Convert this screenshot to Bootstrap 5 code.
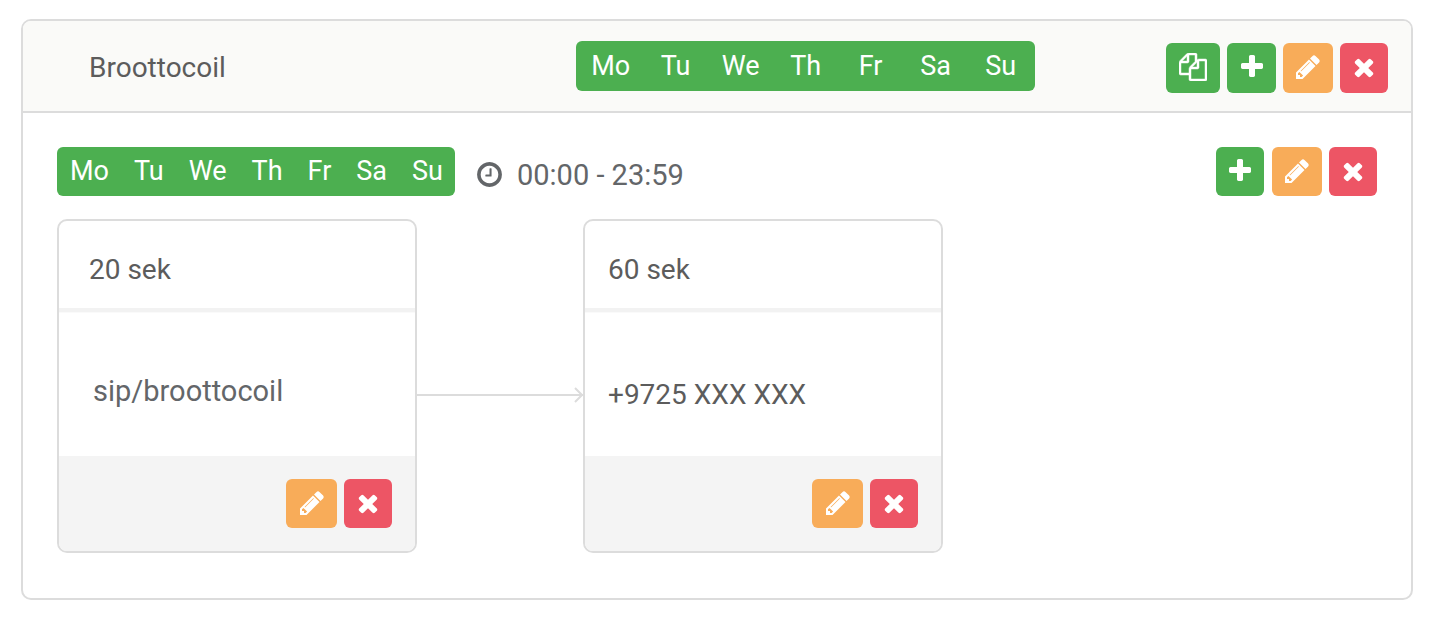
<!DOCTYPE html>
<html lang="en">
<head>
<meta charset="utf-8">
<meta name="viewport" content="width=device-width, initial-scale=1">
<title>Call routing</title>
<link href="https://cdn.jsdelivr.net/npm/bootstrap@5.3.0/dist/css/bootstrap.min.css" rel="stylesheet">
<style>
  :root { --line: #dcdcdc; --green: #4caf50; --amber: #f8ac59; --red: #ed5565; }
  body { font-family: Roboto, "Liberation Sans", sans-serif; font-size: 28px; line-height: 32px; color: #5c5c5c; background: #fff; }
  .page { padding: 19px 22px 20px 21px; }
  .panel, .step { border: 2px solid var(--line); border-radius: 10px; background: #fff; --bs-card-inner-border-radius: 8px; color: inherit; }
  .panel-head { background: #fafaf8; border-bottom: 2px solid var(--line); border-radius: 8px 8px 0 0; padding: 20px 23px 18px 66px; }
  .panel-title { width: 37.5%; font-size: 28px; line-height: 54px; margin-bottom: -2px; font-weight: 400; }
  .days { background: var(--green); color: #fff; border-radius: 6px; font-size: 27px; line-height: 49px; }
  .days-even { padding: 1px 2px 0; height: 50px; }
  .days-even li { width: 65px; text-align: center; }
  .days-tight { padding: 0 12px 0 13px; gap: 25px; }
  .panel-main { padding: 34px 34px 45px; }
  .act { width: 48px; height: 49px; padding: 0 0 2px; border: 0; border-radius: 6px; color: #fff; display: flex; align-items: center; justify-content: center; }
  .act:hover { color: #fff; filter: brightness(.95); }
  .panel-head .act { height: 50px; }
  .act-green, .act-green:hover { background: var(--green); }
  .act-amber, .act-amber:hover { background: var(--amber); width: 50px; }
  .act-red, .act-red:hover { background: var(--red); }
  .panel-head .act-green { width: 49px; }
  .panel-head .act-wide { width: 54px; }
  .step .act-amber { width: 51px; }
  .acts { gap: 7px; }
  .panel-main .act-green { margin-right: 1px; }
  .ico { width: 28px; height: 28px; fill: currentColor; display: block; }
  .ico-bold { stroke: currentColor; stroke-width: 30; }
  .hours { color: #636669; font-size: 29px; line-height: 36px; gap: 13px; margin-left: 20px; padding-top: 6px; }
  .hours .ico { width: 29px; height: 29px; }
  .steps { margin-top: 23px; }
  .step { flex: 0 1 360px; }
  .step-head { padding: 33px 23px 22px; border-bottom: 4px solid #f2f2f2; box-shadow: 0 1px 0 #fafafa; }
  .step-main { height: 144px; padding: 22px 23px 0; }
  .step-first .step-head { padding-left: 30px; }
  .step-first .step-main { padding: 14px 34px 0; font-size: 29px; color: #636669; }
  .step-foot { background: #f4f4f4; border-radius: 0 0 8px 8px; padding: 23px; }
  .link-arrow { flex: 0 1 166px; min-width: 24px; height: 16px; margin-top: 18px; display: flex; align-items: center; position: relative; }
  .link-arrow::before { content: ""; flex: 1; height: 2px; background: var(--line); }
  .link-arrow svg { position: absolute; right: 0; top: 0; width: 10px; height: 16px; fill: none; stroke: var(--line); stroke-width: 2; }
</style>
</head>
<body>
<svg class="d-none" aria-hidden="true">
  <symbol id="i-plus" viewBox="0 0 1792 1792"><path d="M1600 736v192q0 40-28 68t-68 28h-416v416q0 40-28 68t-68 28h-192q-40 0-68-28t-28-68v-416h-416q-40 0-68-28t-28-68v-192q0-40 28-68t68-28h416v-416q0-40 28-68t68-28h192q40 0 68 28t28 68v416h416q40 0 68 28t28 68z"/></symbol>
  <symbol id="i-close" viewBox="0 0 1792 1792"><path d="M1490 1322q0 40-28 68l-136 136q-28 28-68 28t-68-28l-294-294-294 294q-28 28-68 28t-68-28l-136-136q-28-28-28-68t28-68l294-294-294-294q-28-28-28-68t28-68l136-136q28-28 68-28t68 28l294 294 294-294q28-28 68-28t68 28l136 136q28 28 28 68t-28 68l-294 294 294 294q28 28 28 68z"/></symbol>
  <symbol id="i-pencil" viewBox="0 0 1792 1792"><path d="M491 1536l91-91-235-235-91 91v107h128v128h107zm523-928q0-22-22-22-10 0-17 7l-542 542q-7 7-7 17 0 22 22 22 10 0 17-7l542-542q7-7 7-17zm-54-192l416 416-832 832h-416v-416zm683 96q0 53-37 90l-166 166-416-416 166-165q36-38 90-38 53 0 91 38l235 234q37 39 37 91z"/></symbol>
  <symbol id="i-clock" viewBox="0 0 1792 1792"><path d="M1024 544v448q0 14-9 23t-23 9h-320q-14 0-23-9t-9-23v-64q0-14 9-23t23-9h224v-352q0-14 9-23t23-9h64q14 0 23 9t9 23zm416 352q0-148-73-273t-198-198-273-73-273 73-198 198-73 273 73 273 198 198 273 73 273-73 198-198 73-273zm224 0q0 209-103 385.5t-279.5 279.5-385.5 103-385.5-103-279.5-279.5-103-385.5 103-385.5 279.5-279.5 385.5-103 385.5 103 279.5 279.5 103 385.5z"/></symbol>
  <symbol id="i-copy" viewBox="0 0 1792 1792"><path d="M1696 384q40 0 68 28t28 68v1216q0 40-28 68t-68 28h-960q-40 0-68-28t-28-68v-288h-544q-40 0-68-28t-28-68v-672q0-40 20-88t48-76l408-408q28-28 76-48t88-20h416q40 0 68 28t28 68v328q68-40 128-40h416zm-544 213l-299 299h299v-299zm-640-384l-299 299h299v-299zm196 647l316-316v-416h-384v416q0 40-28 68t-68 28h-416v640h512v-256q0-40 20-88t48-76zm956 804v-1152h-384v416q0 40-28 68t-68 28h-416v640h896z"/></symbol>
</svg>

<main class="page">
  <section class="card panel">
    <header class="panel-head d-flex align-items-start">
      <h1 class="panel-title">Broottocoil</h1>
      <ul class="days days-even list-unstyled d-flex mb-0">
        <li>Mo</li><li>Tu</li><li>We</li><li>Th</li><li>Fr</li><li>Sa</li><li>Su</li>
      </ul>
      <div class="acts d-flex ms-auto mt-auto">
        <button type="button" class="btn act act-green act-wide" aria-label="Copy"><svg class="ico ico-bold"><use href="#i-copy"/></svg></button>
        <button type="button" class="btn act act-green" aria-label="Add"><svg class="ico"><use href="#i-plus"/></svg></button>
        <button type="button" class="btn act act-amber" aria-label="Edit"><svg class="ico"><use href="#i-pencil"/></svg></button>
        <button type="button" class="btn act act-red" aria-label="Delete"><svg class="ico"><use href="#i-close"/></svg></button>
      </div>
    </header>

    <div class="panel-main">
      <div class="d-flex align-items-center">
        <ul class="days days-tight list-unstyled d-flex mb-0">
          <li>Mo</li><li>Tu</li><li>We</li><li>Th</li><li>Fr</li><li>Sa</li><li>Su</li>
        </ul>
        <div class="hours d-flex align-items-center"><svg class="ico" aria-hidden="true"><use href="#i-clock"/></svg><span>00:00 - 23:59</span></div>
        <div class="acts d-flex ms-auto">
          <button type="button" class="btn act act-green" aria-label="Add"><svg class="ico"><use href="#i-plus"/></svg></button>
          <button type="button" class="btn act act-amber" aria-label="Edit"><svg class="ico"><use href="#i-pencil"/></svg></button>
          <button type="button" class="btn act act-red" aria-label="Delete"><svg class="ico"><use href="#i-close"/></svg></button>
        </div>
      </div>

      <div class="steps d-flex align-items-center">
        <article class="card step step-first">
          <div class="step-head">20 sek</div>
          <div class="step-main d-flex align-items-center">sip/broottocoil</div>
          <div class="step-foot acts d-flex justify-content-end">
            <button type="button" class="btn act act-amber" aria-label="Edit"><svg class="ico"><use href="#i-pencil"/></svg></button>
            <button type="button" class="btn act act-red" aria-label="Delete"><svg class="ico"><use href="#i-close"/></svg></button>
          </div>
        </article>
        <div class="link-arrow" aria-hidden="true"><svg viewBox="0 0 10 16"><path d="M2 1L9 8L2 15"/></svg></div>
        <article class="card step">
          <div class="step-head">60 sek</div>
          <div class="step-main d-flex align-items-center">+9725 XXX XXX</div>
          <div class="step-foot acts d-flex justify-content-end">
            <button type="button" class="btn act act-amber" aria-label="Edit"><svg class="ico"><use href="#i-pencil"/></svg></button>
            <button type="button" class="btn act act-red" aria-label="Delete"><svg class="ico"><use href="#i-close"/></svg></button>
          </div>
        </article>
      </div>
    </div>
  </section>
</main>
<script src="https://cdn.jsdelivr.net/npm/bootstrap@5.3.0/dist/js/bootstrap.bundle.min.js"></script>
</body>
</html>
